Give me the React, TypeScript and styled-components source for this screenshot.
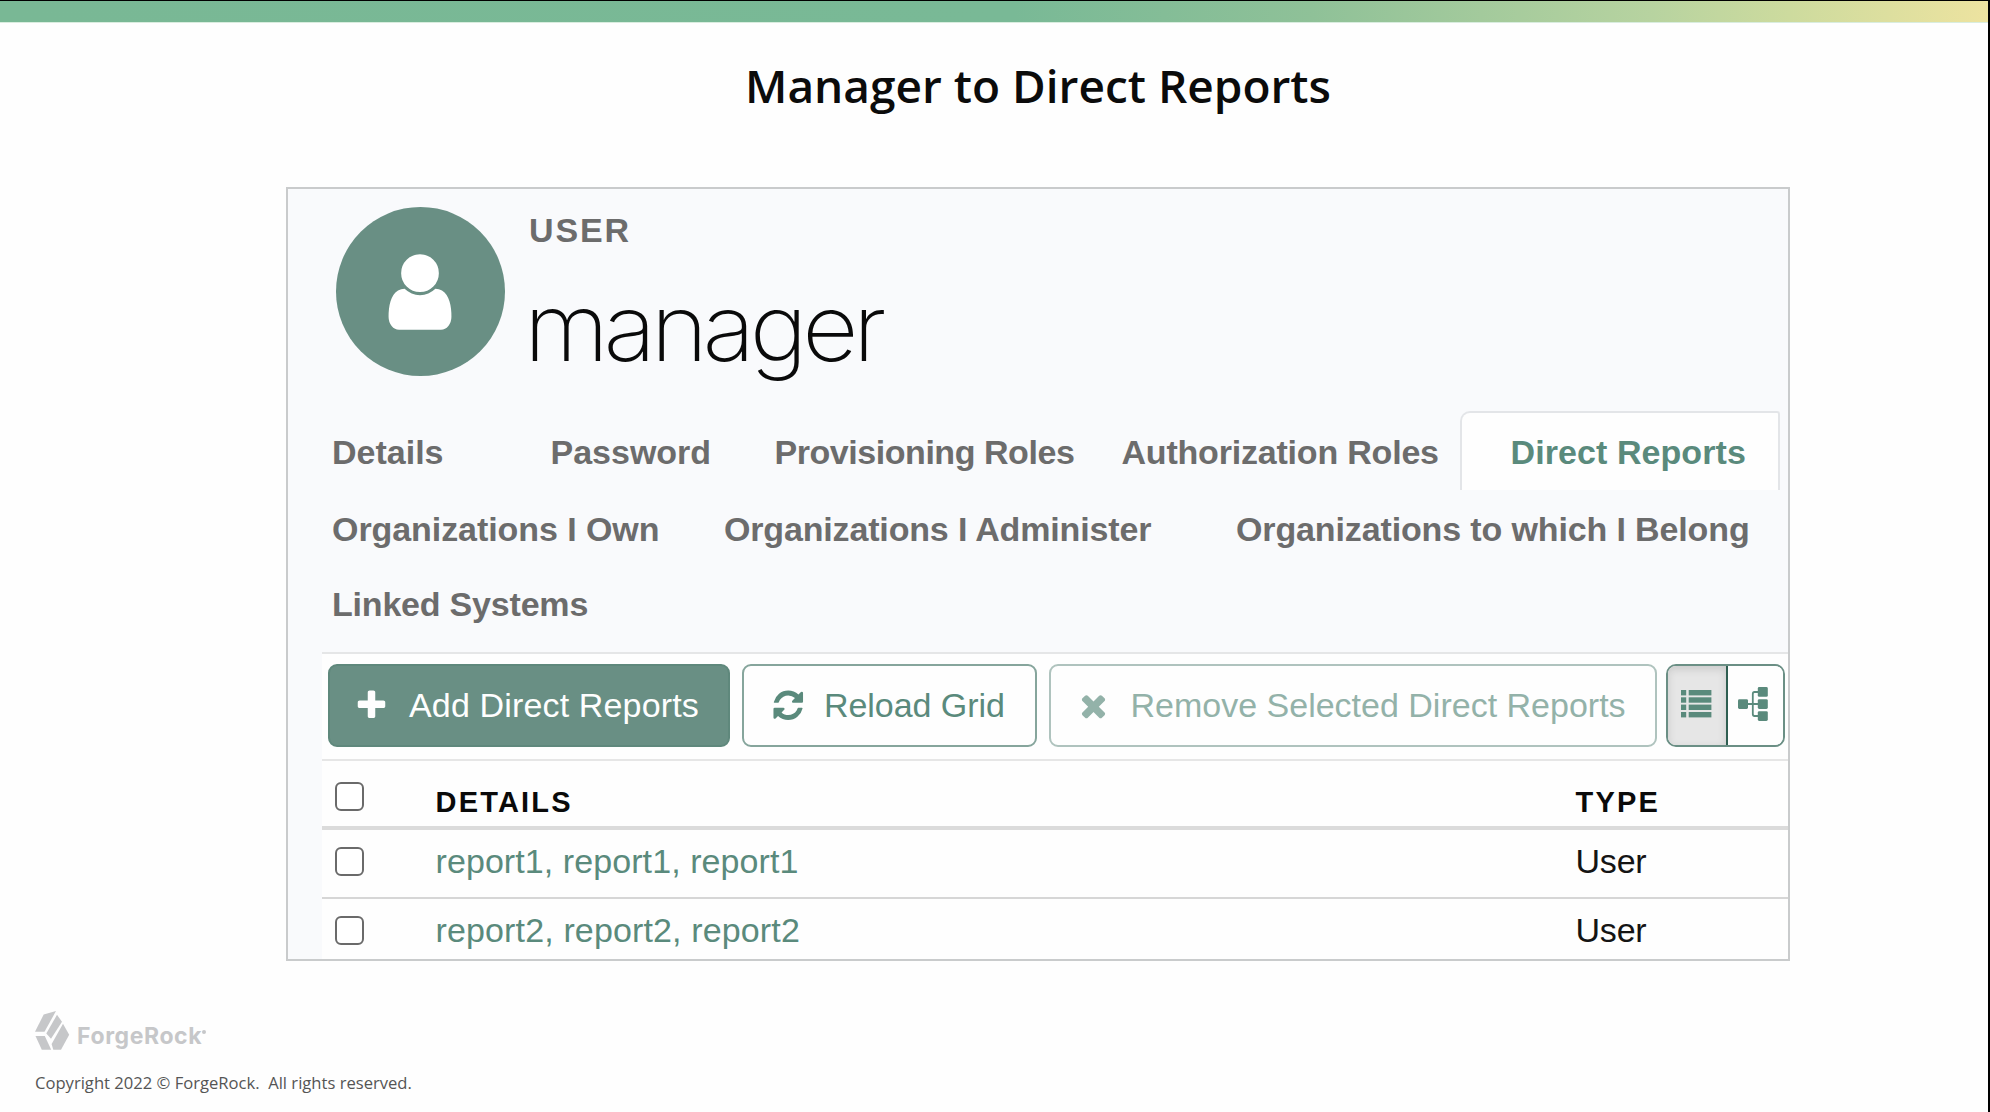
import React from "react";
import styled, { createGlobalStyle } from "styled-components";

const GREEN = "#698f84";
const LINK = "#5a8a7c";

const Global = createGlobalStyle`
  * { box-sizing: border-box; }
  body { margin: 0; background: #fefefe; }
`;

const Slide = styled.main`
  width: 1990px;
  height: 1112px;
  overflow: hidden;
  display: flex;
  flex-direction: column;
  background: #fefefe;
  border-top: 1px solid #000;
  border-right: 2px solid #000;
  font-family: "Liberation Sans", Arial, sans-serif;
`;

const TopBar = styled.div`
  flex: none;
  height: 22px;
  border-bottom: 1px solid #d9eddf;
  background: linear-gradient(90deg, #79b895 0%, #79b996 51%, #8fc198 66%, #b7d3a0 83%, #cddb9e 90%, #ede3a0 100%);
`;

const Title = styled.h1`
  flex: none;
  margin: 0 0 40px 88px;
  height: 124px;
  line-height: 124px;
  text-align: center;
  font-family: "Open Sans", sans-serif;
  font-weight: 600;
  font-size: 46px;
  color: #0b0b0b;
  white-space: nowrap;
`;

const Panel = styled.section`
  flex: none;
  margin-left: 286px;
  width: 1504px;
  height: 774px;
  border: 2px solid #c9cbcc;
  background: #f9fafc;
  display: flex;
  flex-direction: column;
  overflow: hidden;
`;

const Header = styled.header`
  flex: none;
  height: 222px;
  padding: 18px 0 0 48px;
  display: flex;
  gap: 24px;
`;

const Avatar = styled.div`
  width: 169px;
  height: 169px;
  padding-right: 2px;
  border-radius: 50%;
  background: ${GREEN};
  display: flex;
  align-items: center;
  justify-content: center;
  svg { fill: #fff; }
`;

const Heading = styled.div`
  display: flex;
  flex-direction: column;
  white-space: nowrap;
`;

const Kind = styled.div`
  height: 47px;
  line-height: 47px;
  font-size: 34px;
  font-weight: 700;
  letter-spacing: 1.9px;
  color: #6c6c6c;
`;

const Name = styled.div`
  height: 147px;
  margin-left: -5.5px;
  line-height: 147px;
  font-family: Inter, sans-serif;
  font-weight: 200;
  font-size: 93px;
  letter-spacing: -5.1px;
  transform: scaleX(1.05);
  transform-origin: left center;
  color: #0a0a0a;
`;

const TabRow = styled.nav<{ $cols: string; $h: number }>`
  flex: none;
  height: ${(p) => p.$h}px;
  margin-left: 44px;
  display: grid;
  grid-template-columns: ${(p) => p.$cols};
`;

const Tab = styled.a<{ $active?: boolean; $ls?: number; $drop?: number }>`
  display: flex;
  align-items: center;
  padding-top: ${(p) => p.$drop ?? 0}px;
  white-space: nowrap;
  font-size: 34px;
  font-weight: 700;
  letter-spacing: ${(p) => p.$ls ?? 0}px;
  color: ${(p) => (p.$active ? LINK : "#6c6c6c")};
  ${(p) =>
    p.$active &&
    `
    background: #fefefe;
    border: 2px solid #e3e5e8;
    border-bottom: 0;
    border-radius: 10px 3px 0 0;
    padding-left: 49px;
    margin-left: -1px;
  `}
`;

const Content = styled.div`
  flex: 1;
  margin: 11px 0 0 34px;
  border-top: 2px solid #e5e6e7;
  background: #fefefe;
`;

const Toolbar = styled.div`
  height: 107px;
  padding: 10px 0 0 5.5px;
  display: flex;
  border-bottom: 2px solid #e6e6e6;
`;

const Button = styled.button<{ $w: number; $gap: number; $pad: number; $ls?: number; $primary?: boolean; $disabled?: boolean }>`
  flex: none;
  width: ${(p) => p.$w}px;
  height: 83px;
  margin: 0 12.5px 0 0;
  padding: 0 0 0 ${(p) => p.$pad}px;
  display: flex;
  align-items: center;
  gap: ${(p) => p.$gap}px;
  border: 2px solid ${(p) => (p.$primary ? "#5f887c" : "#86a59c")};
  border-radius: 9px;
  background: ${(p) => (p.$primary ? GREEN : "#fefefe")};
  color: ${(p) => (p.$primary ? "#fefefe" : LINK)};
  opacity: ${(p) => (p.$disabled ? 0.65 : 1)};
  font-family: inherit;
  font-size: 34px;
  letter-spacing: ${(p) => p.$ls ?? 0}px;
  white-space: nowrap;
  svg { fill: currentColor; flex: none; }
`;

const Toggle = styled.div`
  flex: none;
  margin-left: -3px;
  width: 119px;
  height: 83px;
  display: flex;
  border: 2px solid #6b8f85;
  border-radius: 10px;
  overflow: hidden;
`;

const ToggleItem = styled.button<{ $on?: boolean }>`
  width: ${(p) => (p.$on ? 59.5 : 55.5)}px;
  padding: 0 0 4px ${(p) => (p.$on ? 13 : 10)}px;
  border: 0;
  border-right: ${(p) => (p.$on ? "2px solid #2f5e51" : "0")};
  background: ${(p) => (p.$on ? "#e6e6e6" : "#fefefe")};
  box-shadow: ${(p) => (p.$on ? "inset 0 3px 8px rgba(0,0,0,.13)" : "none")};
  display: flex;
  align-items: center;
  svg { fill: ${LINK}; flex: none; }
`;

const Row = styled.div<{ $head?: boolean; $h: number }>`
  height: ${(p) => p.$h}px;
  display: grid;
  grid-template-columns: 113.5px 1140px 1fr;
  border-bottom: ${(p) => (p.$head ? 4 : 2)}px solid ${(p) => (p.$head ? "#dbdbdb" : "#d6d6d6")};
  &:last-child { border-bottom: 0; }
`;

const Check = styled.span<{ $top: number }>`
  width: 29px;
  height: 29px;
  margin: ${(p) => p.$top}px 0 0 12.5px;
  border: 2px solid #6a6a6a;
  border-radius: 6px;
  background: #fff;
`;

const Th = styled.span`
  line-height: 83px;
  font-size: 29px;
  font-weight: 700;
  letter-spacing: 2.2px;
  color: #0a0a0a;
`;

const Td = styled.span<{ $link?: boolean; $ls?: number }>`
  line-height: 63px;
  font-size: 34px;
  letter-spacing: ${(p) => p.$ls ?? -0.2}px;
  white-space: nowrap;
  color: ${(p) => (p.$link ? LINK : "#141414")};
`;

const Footer = styled.footer`
  display: flex;
  flex-direction: column;
  padding: 50px 0 0 35px;
`;

const Brand = styled.div`
  height: 40px;
  display: flex;
  align-items: flex-start;
  gap: 7px;
  color: #c6c7c9;
  svg { fill: currentColor; }
`;

const Wordmark = styled.span`
  display: flex;
  align-items: center;
  line-height: 50px;
  font-family: Inter, sans-serif;
  font-weight: 700;
  font-size: 23px;
  letter-spacing: 0.6px;
`;

const Registered = styled.i`
  width: 4px;
  height: 4px;
  margin: 0 0 9px 0;
  border-radius: 50%;
  background: currentColor;
`;

const Copyright = styled.div`
  line-height: 64px;
  font-family: "Open Sans", sans-serif;
  font-size: 16.6px;
  color: #555;
  white-space: pre;
`;

const Glyph = ({ d, size }: { d: string; size: number }) => (
  <svg width={size} height={size} viewBox="0 0 1792 1792"><path d={d} /></svg>
);

const USER = "M1536 1399q0 109-62.5 187t-150.5 78h-854q-88 0-150.5-78t-62.5-187q0-85 8.5-160.5t31.5-152 58.5-131 94-89 134.5-34.5q131 128 313 128t313-128q76 0 134.5 34.5t94 89 58.5 131 31.5 152 8.5 160.5zm-256-887q0 159-112.5 271.5t-271.5 112.5-271.5-112.5-112.5-271.5 112.5-271.5 271.5-112.5 271.5 112.5 112.5 271.5z";
const PLUS = "M1600 736v192q0 40-28 68t-68 28h-416v416q0 40-28 68t-68 28h-192q-40 0-68-28t-28-68v-416h-416q-40 0-68-28t-28-68v-192q0-40 28-68t68-28h416v-416q0-40 28-68t68-28h192q40 0 68 28t28 68v416h416q40 0 68 28t28 68z";
const REFRESH = "M1639 1056q0 5-1 7-64 268-268 434.5t-478 166.5q-146 0-282.5-55t-243.5-157l-129 129q-19 19-45 19t-45-19-19-45v-448q0-26 19-45t45-19h448q26 0 45 19t19 45-19 45l-137 137q71 66 161 102t187 36q134 0 250-65t186-179q11-17 53-117 8-23 30-23h192q13 0 22.5 9.5t9.5 22.5zm25-800v448q0 26-19 45t-45 19h-448q-26 0-45-19t-19-45 19-45l138-138q-148-137-349-137-134 0-250 65t-186 179q-11 17-53 117-8 23-30 23h-199q-13 0-22.5-9.5t-9.5-22.5v-7q65-268 270-434.5t480-166.5q146 0 284 55.5t245 156.5l130-129q19-19 45-19t45 19 19 45z";
const TIMES = "M1490 1322q0 40-28 68l-136 136q-28 28-68 28t-68-28l-294-294-294 294q-28 28-68 28t-68-28l-136-136q-28-28-28-68t28-68l294-294-294-294q-28-28-28-68t28-68l136-136q28-28 68-28t68 28l294 294 294-294q28-28 68-28t68 28l136 136q28 28 28 68t-28 68l-294 294 294 294q28 28 28 68z";

const ListIcon = () => (
  <svg width="31" height="28" viewBox="0 0 31 28">
    {[0, 7.3, 14.6, 22].map((y) => (
      <g key={y}>
        <rect x="0" y={y} width="5.2" height="5.4" />
        <rect x="7.7" y={y} width="22.7" height="5.4" />
      </g>
    ))}
  </svg>
);

const SitemapIcon = () => (
  <svg width="30" height="34" viewBox="0 0 30 34">
    <rect x="0" y="12.2" width="10" height="9.8" rx="1.4" />
    <rect x="19.8" y="0" width="10" height="9.8" rx="1.4" />
    <rect x="19.8" y="12.2" width="10" height="9.8" rx="1.4" />
    <rect x="19.8" y="24.2" width="10" height="9.8" rx="1.4" />
    <path fill="none" stroke={LINK} strokeWidth="1.8" d="M9 17H21M21 5H16.5Q14.8 5 14.8 7V27Q14.8 29 16.5 29H21" />
  </svg>
);

const Mark = () => (
  <svg width="35" height="39" viewBox="0 0 35 39">
    <path d="M8.7 3.5L21 0L9.5 20.8H0Z" />
    <path d="M22 3.8L27 10.8L16 27.8L11.3 22.5Z" />
    <path d="M28 12.8L34.2 23.7L26 38.8H18.3L16.6 33Z" />
    <path d="M0.5 25H9.8L16.2 38.8H6.8Z" />
  </svg>
);

const rows = [
  { name: "report1, report1, report1", ls: 0.08 },
  { name: "report2, report2, report2", ls: 0.14 },
];

export default function App() {
  return (
    <Slide>
      <Global />
      <TopBar />
      <Title>Manager to Direct Reports</Title>
      <Panel>
        <Header>
          <Avatar><Glyph d={USER} size={88} /></Avatar>
          <Heading>
            <Kind>USER</Kind>
            <Name>manager</Name>
          </Heading>
        </Header>
        <TabRow $cols="218.5px 224px 347px 339px 319px" $h={79}>
          <Tab $drop={3}>Details</Tab>
          <Tab $drop={3}>Password</Tab>
          <Tab $drop={3} $ls={-0.45}>Provisioning Roles</Tab>
          <Tab $drop={3} $ls={-0.2}>Authorization Roles</Tab>
          <Tab $active $drop={1} $ls={0.08}>Direct Reports</Tab>
        </TabRow>
        <TabRow $cols="392px 512px 540px" $h={77}>
          <Tab $drop={2} $ls={-0.07}>Organizations I Own</Tab>
          <Tab $drop={2} $ls={-0.16}>Organizations I Administer</Tab>
          <Tab $drop={2} $ls={-0.13}>Organizations to which I Belong</Tab>
        </TabRow>
        <TabRow $cols="300px" $h={74}>
          <Tab $ls={-0.2}>Linked Systems</Tab>
        </TabRow>
        <Content>
          <Toolbar>
            <Button $primary $w={402} $pad={24} $gap={20.5} $ls={0.15}><Glyph d={PLUS} size={35} />Add Direct Reports</Button>
            <Button $w={294.5} $pad={26.5} $gap={19} $ls={-0.05}><Glyph d={REFRESH} size={34.5} />Reload Grid</Button>
            <Button $disabled $w={607.5} $pad={25} $gap={19.5}><Glyph d={TIMES} size={35} />Remove Selected Direct Reports</Button>
            <Toggle>
              <ToggleItem $on><ListIcon /></ToggleItem>
              <ToggleItem><SitemapIcon /></ToggleItem>
            </Toggle>
          </Toolbar>
          <Row $head $h={69}>
            <Check $top={21} />
            <Th>DETAILS</Th>
            <Th>TYPE</Th>
          </Row>
          {rows.map((r, i) => (
            <Row key={r.name} $h={i ? 60 : 69}>
              <Check $top={17} />
              <Td $link $ls={r.ls}>{r.name}</Td>
              <Td>User</Td>
            </Row>
          ))}
        </Content>
      </Panel>
      <Footer>
        <Brand><Mark /><Wordmark>ForgeRock<Registered /></Wordmark></Brand>
        <Copyright>{"Copyright 2022 © ForgeRock.  All rights reserved."}</Copyright>
      </Footer>
    </Slide>
  );
}
